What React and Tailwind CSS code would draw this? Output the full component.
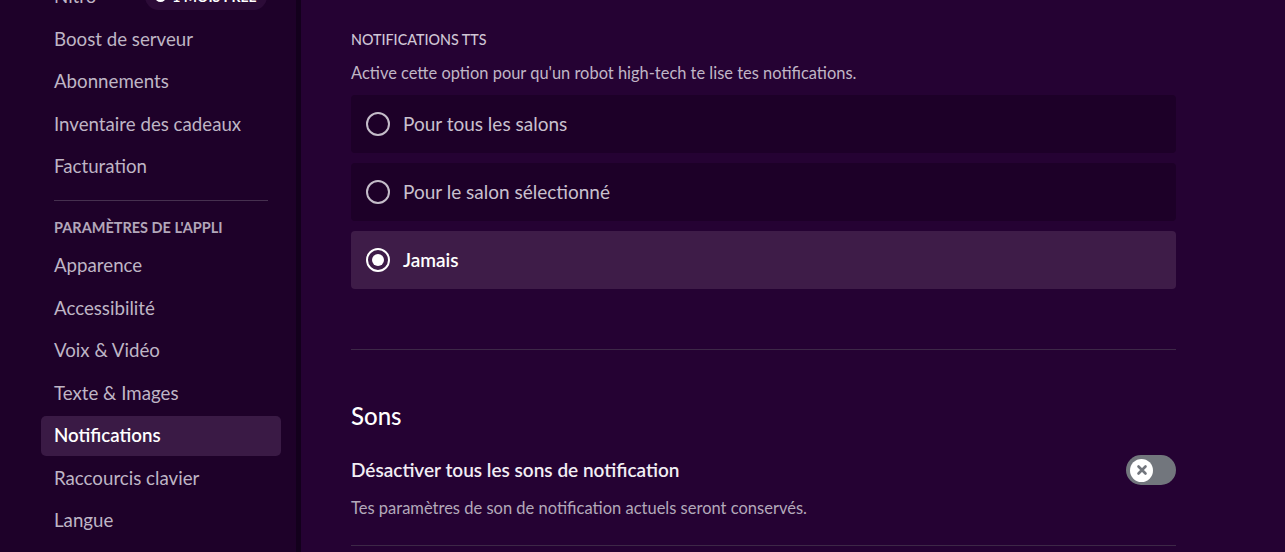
import React from 'react';

const font = { fontFamily: 'Lato, "Noto Sans", sans-serif' };

const accountItems = ['Boost de serveur', 'Abonnements', 'Inventaire des cadeaux', 'Facturation'];
const appItems = [
  'Apparence',
  'Accessibilité',
  'Voix & Vidéo',
  'Texte & Images',
  'Notifications',
  'Raccourcis clavier',
  'Langue',
];

const ttsOptions = [
  { id: 'all', label: 'Pour tous les salons' },
  { id: 'current', label: 'Pour le salon sélectionné' },
  { id: 'never', label: 'Jamais' },
];

function NavItem({ label, active }) {
  return (
    <div
      className={`h-[40px] mb-[2.5px] px-[13px] flex items-center rounded-[5px] text-[18.7px] ${
        active ? 'bg-[#3a1a45] text-white font-semibold' : 'text-[#bfb5c5]'
      }`}
    >
      {label}
    </div>
  );
}

function Radio({ checked }) {
  if (checked) {
    return (
      <span className="w-[24px] h-[24px] rounded-full border-[2.5px] border-white flex items-center justify-center flex-shrink-0">
        <span className="w-[12px] h-[12px] rounded-full bg-white" />
      </span>
    );
  }
  return <span className="w-[24px] h-[24px] rounded-full border-[2.5px] border-[#c4bcc9] flex-shrink-0" />;
}

function Toggle() {
  return (
    <div className="w-[50px] h-[30px] rounded-full bg-[#72767d] flex items-center pl-[4px] flex-shrink-0">
      <div className="w-[23px] h-[23px] rounded-full bg-white flex items-center justify-center">
        <svg width="14" height="14" viewBox="0 0 14 14">
          <path d="M3.5 3.5 L10.5 10.5 M10.5 3.5 L3.5 10.5" stroke="#72767d" strokeWidth="2.6" strokeLinecap="round" />
        </svg>
      </div>
    </div>
  );
}

export default function App() {
  const selected = 'never';

  return (
    <div className="flex h-[552px] w-[1285px] overflow-hidden bg-[#250233]" style={font}>
      {/* Sidebar */}
      <div className="w-[301px] flex-shrink-0 bg-[#1e0129] border-r-[5px] border-[#13001c] overflow-hidden">
        <div className="-mt-[23.5px] pl-[41px] w-[281px]">
          <div className="h-[40px] mb-[2.5px] px-[13px] flex items-center text-[18.7px] text-[#bfb5c5]">
            <span>Nitro</span>
            <span className="ml-[49px] flex items-center gap-[6px] bg-[#2c0b37] rounded-full px-[10px] py-[3px] text-[14px] font-bold text-white">
              <span className="w-[11px] h-[11px] rounded-full bg-white" />
              1 MOIS FREE
            </span>
          </div>
          {accountItems.map((item) => (
            <NavItem key={item} label={item} />
          ))}
          <div className="mx-[13px] mt-[13px] h-px bg-[#46304f]" />
          <div className="px-[13px] pt-[18.5px] pb-[8.5px] text-[14.5px] leading-[18px] font-bold uppercase text-[#b3a7ba]">
            Paramètres de l'appli
          </div>
          {appItems.map((item) => (
            <NavItem key={item} label={item} active={item === 'Notifications'} />
          ))}
        </div>
      </div>

      {/* Main content */}
      <div className="flex-1 pl-[50px] pt-[31px]">
        <div className="w-[825px]">
          <div className="text-[14.3px] leading-[18px] font-medium uppercase text-[#cfc5d5]">Notifications TTS</div>
          <div className="mt-[14px] text-[16.45px] leading-[20px] text-[#c0b6c6]">
            Active cette option pour qu'un robot high-tech te lise tes notifications.
          </div>
          <div className="mt-[12px] flex flex-col gap-[10px]">
            {ttsOptions.map((opt) => {
              const isOn = opt.id === selected;
              return (
                <div
                  key={opt.id}
                  className={`h-[58px] rounded-[4px] flex items-center gap-[13px] pl-[15px] ${
                    isOn ? 'bg-[#3e1c48]' : 'bg-[#1d0028]'
                  }`}
                >
                  <Radio checked={isOn} />
                  <span className={`text-[19px] ${isOn ? 'text-white font-semibold' : 'text-[#c9c0ce]'}`}>{opt.label}</span>
                </div>
              );
            })}
          </div>

          <div className="mt-[60px] h-px bg-[#3d2847]" />

          <div className="mt-[51px] text-[24px] leading-[30px] font-medium text-white">Sons</div>

          <div className="mt-[24px] flex items-center justify-between">
            <span className="text-[19px] font-semibold text-[#f2eef4]">Désactiver tous les sons de notification</span>
            <Toggle />
          </div>
          <div className="mt-[13px] text-[16.5px] leading-[20px] text-[#b3a9ba]">
            Tes paramètres de son de notification actuels seront conservés.
          </div>
          <div className="mt-[27px] h-px bg-[#3d2847]" />
        </div>
      </div>
    </div>
  );
}
